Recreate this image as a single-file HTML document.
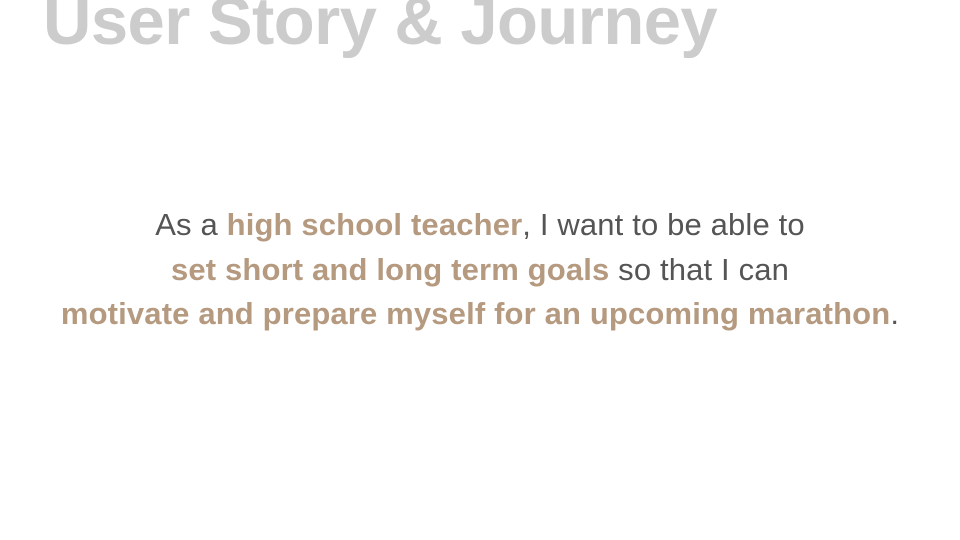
<!DOCTYPE html>
<html><head><style>
html,body{margin:0;padding:0;background:#fff;width:960px;height:540px;overflow:hidden;position:relative}
h1{position:absolute;left:43px;top:-17px;margin:0;font:bold 67px "Liberation Sans",sans-serif;color:#cccccc;letter-spacing:-0.55px;white-space:nowrap}
.t{position:absolute;left:0;width:960px;top:203px;text-align:center;font:31px/44.5px "Liberation Sans",sans-serif;letter-spacing:0.15px;color:#555;}
b{color:#b59a80;font-weight:bold}
</style></head><body>
<h1>User Story &amp; Journey</h1>
<div class="t">As a <b>high school teacher</b>, I want to be able to<br><b>set short and long term goals</b> so that I can<br><b>motivate and prepare myself for an upcoming marathon</b>.</div>
</body></html>
